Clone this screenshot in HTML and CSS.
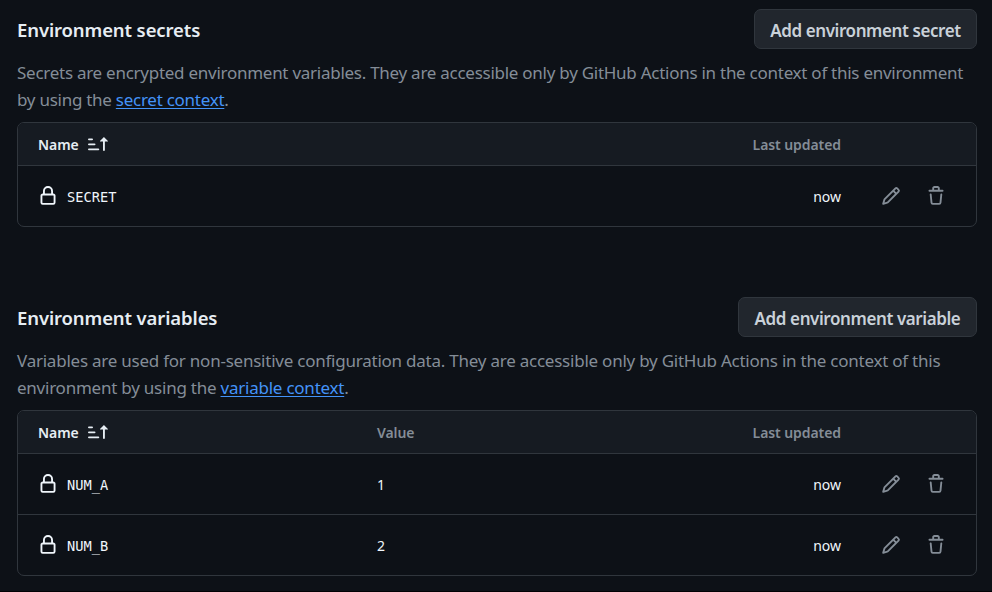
FILE: index.html
```html
<!DOCTYPE html>
<html lang="en">
<head>
<meta charset="utf-8">
<title>Environment secrets and variables</title>
<link rel="stylesheet" href="styles.css">
</head>
<body>
<svg class="sprite" aria-hidden="true">
  <symbol id="lock" viewBox="0 0 16 16"><path d="M4 4a4 4 0 0 1 8 0v2h.25c.966 0 1.75.784 1.75 1.75v5.5A1.75 1.75 0 0 1 12.25 15h-8.5A1.75 1.75 0 0 1 2 13.25v-5.5C2 6.784 2.784 6 3.75 6H4Zm8.25 3.5h-8.5a.25.25 0 0 0-.25.25v5.5c0 .138.112.25.25.25h8.5a.25.25 0 0 0 .25-.25v-5.5a.25.25 0 0 0-.25-.25ZM10.5 6V4a2.5 2.5 0 1 0-5 0v2Z"/></symbol>
  <symbol id="pencil" viewBox="0 0 16 16"><path d="M11.013 1.427a1.75 1.75 0 0 1 2.474 0l1.086 1.086a1.75 1.75 0 0 1 0 2.474l-8.61 8.61c-.21.21-.47.364-.756.445l-3.251.93a.75.75 0 0 1-.927-.928l.929-3.25c.081-.286.235-.547.445-.758l8.61-8.61Zm.176 4.823L9.75 4.81l-6.286 6.287a.253.253 0 0 0-.064.108l-.558 1.953 1.953-.558a.253.253 0 0 0 .108-.064Zm1.238-3.763a.25.25 0 0 0-.354 0L10.811 3.75l1.439 1.44 1.263-1.263a.25.25 0 0 0 0-.354Z"/></symbol>
  <symbol id="trash" viewBox="0 0 16 16"><path d="M11 1.75V3h2.25a.75.75 0 0 1 0 1.5H2.75a.75.75 0 0 1 0-1.5H5V1.75C5 .784 5.784 0 6.75 0h2.5C10.216 0 11 .784 11 1.75ZM4.496 6.675l.66 6.6a.25.25 0 0 0 .249.225h5.19a.25.25 0 0 0 .249-.225l.66-6.6a.75.75 0 0 1 1.492.149l-.66 6.6A1.748 1.748 0 0 1 10.595 15h-5.19a1.75 1.75 0 0 1-1.741-1.575l-.66-6.6a.75.75 0 1 1 1.492-.15ZM6.5 1.75V3h3V1.75a.25.25 0 0 0-.25-.25h-2.5a.25.25 0 0 0-.25.25Z"/></symbol>
  <symbol id="sort" viewBox="0 0 16 16"><path d="m12.927 2.573 3 3A.25.25 0 0 1 15.75 6H13.5v6.75a.75.75 0 0 1-1.5 0V6H9.75a.25.25 0 0 1-.177-.427l3-3a.25.25 0 0 1 .354 0ZM0 12.25a.75.75 0 0 1 .75-.75h7.5a.75.75 0 0 1 0 1.5H.75a.75.75 0 0 1-.75-.75Zm0-4a.75.75 0 0 1 .75-.75h4.5a.75.75 0 0 1 0 1.5H.75A.75.75 0 0 1 0 8.25Zm0-4a.75.75 0 0 1 .75-.75h2.5a.75.75 0 0 1 0 1.5H.75A.75.75 0 0 1 0 4.25Z"/></symbol>
</svg>
<main class="page">
  <section class="section">
    <header class="section-head">
      <h2 class="title">Environment secrets</h2>
      <button class="button button-secret">Add environment secret</button>
    </header>
    <p class="description">Secrets are encrypted environment variables. They are accessible only by GitHub Actions in the context of this environment<br>by using the <a class="link" href="#">secret context</a>.</p>
    <div class="table">
      <div class="row row-head">
        <div class="cell-name strong"><span class="name-label">Name</span><svg class="icon"><use href="#sort"/></svg></div>
        <div></div>
        <div class="cell-updated">Last updated</div>
        <div></div>
      </div>
      <div class="row">
        <div class="cell-name"><svg class="icon"><use href="#lock"/></svg><code class="code">SECRET</code></div>
        <div></div>
        <div class="cell-updated">now</div>
        <div class="cell-actions"><svg class="icon"><use href="#pencil"/></svg><svg class="icon"><use href="#trash"/></svg></div>
      </div>
    </div>
  </section>
  <section class="section">
    <header class="section-head">
      <h2 class="title">Environment variables</h2>
      <button class="button button-variable">Add environment variable</button>
    </header>
    <p class="description description-variables">Variables are used for non-sensitive configuration data. They are accessible only by GitHub Actions in the context of this<br>environment by using the <a class="link" href="#">variable context</a>.</p>
    <div class="table">
      <div class="row row-head">
        <div class="cell-name strong"><span class="name-label">Name</span><svg class="icon"><use href="#sort"/></svg></div>
        <div>Value</div>
        <div class="cell-updated">Last updated</div>
        <div></div>
      </div>
      <div class="row">
        <div class="cell-name"><svg class="icon"><use href="#lock"/></svg><code class="code">NUM_A</code></div>
        <div>1</div>
        <div class="cell-updated">now</div>
        <div class="cell-actions"><svg class="icon"><use href="#pencil"/></svg><svg class="icon"><use href="#trash"/></svg></div>
      </div>
      <div class="row">
        <div class="cell-name"><svg class="icon"><use href="#lock"/></svg><code class="code">NUM_B</code></div>
        <div>2</div>
        <div class="cell-updated">now</div>
        <div class="cell-actions"><svg class="icon"><use href="#pencil"/></svg><svg class="icon"><use href="#trash"/></svg></div>
      </div>
    </div>
  </section>
</main>
</body>
</html>
```
FILE: styles.css
```css
* { box-sizing: border-box; }
body {
  margin: 0;
  background: #0d1117;
  color: #f0f6fc;
  font-family: "Segoe UI", "Noto Sans", "Open Sans", sans-serif;
  font-size: 14px;
}
.sprite { display: none; }
.page {
  height: 592px;
  padding: 9px 15px 0 17px;
  border-bottom: 1px solid #020104;
  overflow: hidden;
}
.section + .section { margin-top: 70px; }
.section-head {
  display: flex;
  align-items: center;
  justify-content: space-between;
  height: 40px;
}
.title {
  margin: 0;
  padding-top: 2px;
  font-size: 18.5px;
  line-height: 28px;
  font-weight: 600;
  letter-spacing: -0.12px;
  color: #e6edf3;
}
.button {
  height: 40px;
  padding: 3px 0 0;
  border: 1px solid #30363d;
  border-radius: 7px;
  background: #21262d;
  color: #c9d1d9;
  font: 600 17px/34px "Segoe UI", "Noto Sans", sans-serif;
  letter-spacing: -0.41px;
  white-space: nowrap;
}
.button-secret { width: 223px; }
.button-variable { width: 239px; }
.description {
  height: 54px;
  margin: 10px 0 9px;
  font-size: 17px;
  line-height: 27px;
  letter-spacing: -0.265px;
  color: #848d97;
  white-space: nowrap;
}
.description-variables { letter-spacing: -0.235px; }
.link { color: #4493f8; text-decoration: underline; text-underline-offset: 2px; }
.table { border: 1px solid #30363d; border-radius: 7px; overflow: hidden; }
.row {
  display: grid;
  grid-template-columns: 339px 310px 154px 1fr;
  align-items: center;
  height: 60px;
  padding-left: 20px;
}
.row + .row { height: 61px; border-top: 1px solid #30363d; }
.row-head {
  height: 42px;
  background: #161b22;
  color: #848d97;
  font-weight: 600;
  letter-spacing: -0.08px;
}
.strong { color: #e6edf3; }
.cell-name { display: flex; align-items: center; }
.name-label { width: 50px; }
.cell-updated { text-align: right; }
.cell-actions { display: flex; gap: 25px; padding-left: 40px; color: #848d97; }
.icon { display: block; flex: none; width: 20px; height: 20px; fill: currentColor; }
.code { margin-left: 9px; padding-top: 2px; font: 13.7px "Consolas", "DejaVu Sans Mono", monospace; }
```
